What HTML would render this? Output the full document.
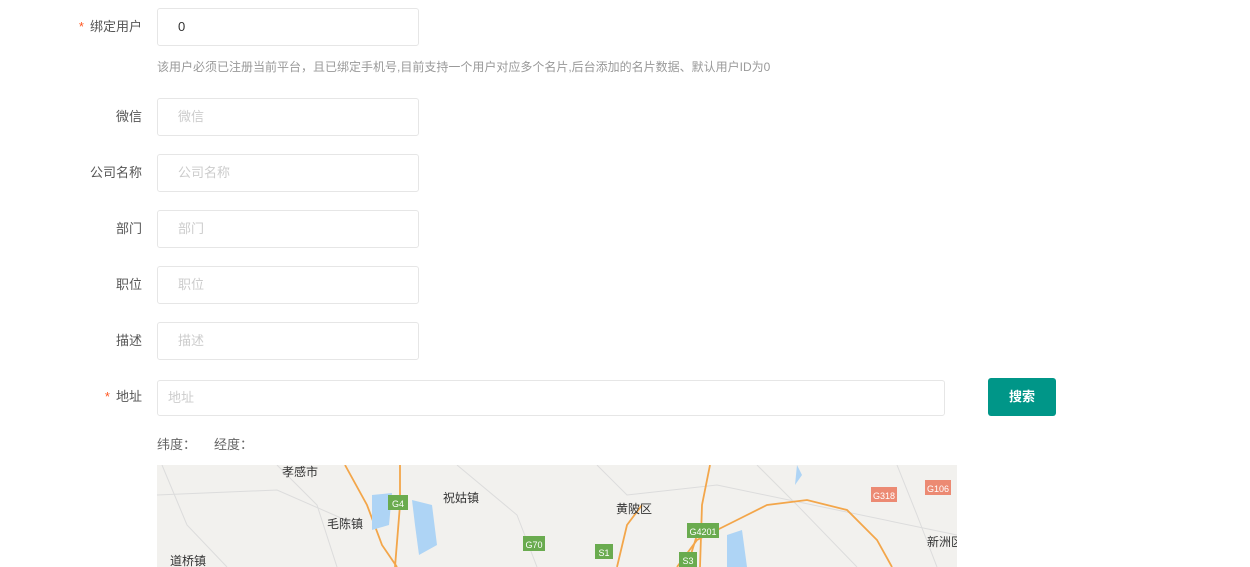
<!DOCTYPE html><html><head><meta charset="utf-8"><style>
body{margin:0;width:1250px;height:567px;overflow:hidden;background:#fff;font-family:"Liberation Sans","Noto Sans CJK SC",sans-serif;position:relative}
.l{position:absolute;right:1108px;font-size:13px;color:#555;line-height:20px;white-space:nowrap}
.l b{color:#ff5722;font-weight:normal;margin-right:6px}
.i{position:absolute;left:157px;width:260px;height:36px;border:1px solid #e6e6e6;border-radius:3px;box-sizing:content-box;font-size:13px;color:#ccc;line-height:36px;text-indent:20px}
.t{position:absolute;font-size:12px;color:#999;white-space:nowrap}
</style></head><body>
<div class="l" style="top:17px"><b>*</b>绑定用户</div><div class="i" style="top:8px;color:#333">0</div>
<div class="t" style="left:157px;top:58px">该用户必须已注册当前平台，且已绑定手机号,目前支持一个用户对应多个名片,后台添加的名片数据、默认用户ID为0</div>
<div class="l" style="top:107px">微信</div><div class="i" style="top:98px">微信</div>
<div class="l" style="top:163px">公司名称</div><div class="i" style="top:154px">公司名称</div>
<div class="l" style="top:219px">部门</div><div class="i" style="top:210px">部门</div>
<div class="l" style="top:275px">职位</div><div class="i" style="top:266px">职位</div>
<div class="l" style="top:331px">描述</div><div class="i" style="top:322px">描述</div>
<div class="l" style="top:387px"><b>*</b>地址</div><div class="i" style="top:380px;width:786px;height:34px;line-height:34px;text-indent:10px">地址</div>
<div style="position:absolute;left:988px;top:378px;width:68px;height:38px;background:#009688;border-radius:3px;color:#fff;font-size:13px;font-weight:bold;line-height:38px;text-align:center">搜索</div>
<div class="t" style="left:157px;top:434px;color:#666;font-size:13px">纬度：&nbsp;&nbsp;&nbsp;&nbsp;&nbsp;经度：</div>
<svg style="position:absolute;left:157px;top:465px" width="800" height="102" font-family="Liberation Sans,Noto Sans CJK SC,sans-serif" font-size="12">
<rect width="800" height="102" fill="#f2f1ee"/>
<g fill="none" stroke="#dcdcdc" stroke-width="1">
<path d="M5 0 L30 60 L70 102"/><path d="M120 0 L160 40 L180 102"/><path d="M300 0 L360 50 L380 102"/><path d="M440 0 L470 30 L560 20 L800 70"/><path d="M0 30 L120 25 L200 60"/><path d="M600 0 L640 40 L700 102"/><path d="M740 0 L760 50 L780 102"/>
</g>
<g fill="none" stroke="#f3a64a" stroke-width="1.8"><path d="M243 0 L243 40 L238 102"/><path d="M188 0 L210 40 L225 80 L240 102"/><path d="M553 0 L545 40 L543 102"/><path d="M520 102 L540 75 L580 55 L610 40 L650 35 L690 45 L720 75 L735 102"/><path d="M460 102 L470 60 L485 40"/><path d="M530 102 L540 70"/></g>
<g fill="#aed4f5"><path d="M215 30 L235 28 L232 60 L215 65 Z"/><path d="M255 35 L275 40 L280 80 L262 90 L258 60 Z"/><path d="M570 70 L585 65 L590 102 L570 102 Z"/><path d="M640 0 L645 10 L638 20 Z"/></g>
<g font-size="9" fill="#fff" text-anchor="middle"><rect x="231" y="30" width="20" height="15" fill="#6aab4f"/><text x="241" y="42">G4</text>
<rect x="366" y="71" width="22" height="15" fill="#6aab4f"/><text x="377" y="83">G70</text>
<rect x="438" y="79" width="18" height="15" fill="#6aab4f"/><text x="447" y="91">S1</text>
<rect x="530" y="58" width="32" height="15" fill="#6aab4f"/><text x="546" y="70">G4201</text>
<rect x="522" y="87" width="18" height="15" fill="#6aab4f"/><text x="531" y="99">S3</text>
<rect x="714" y="22" width="26" height="15" fill="#ec8a73"/><text x="727" y="34">G318</text>
<rect x="768" y="15" width="26" height="15" fill="#ec8a73"/><text x="781" y="27">G106</text></g>
<g fill="#333"><text x="125" y="11">孝感市</text><text x="286" y="37">祝姑镇</text><text x="170" y="63">毛陈镇</text><text x="459" y="48">黄陂区</text><text x="770" y="81">新洲区</text><text x="13" y="100">道桥镇</text></g>
</svg>
</body></html>
